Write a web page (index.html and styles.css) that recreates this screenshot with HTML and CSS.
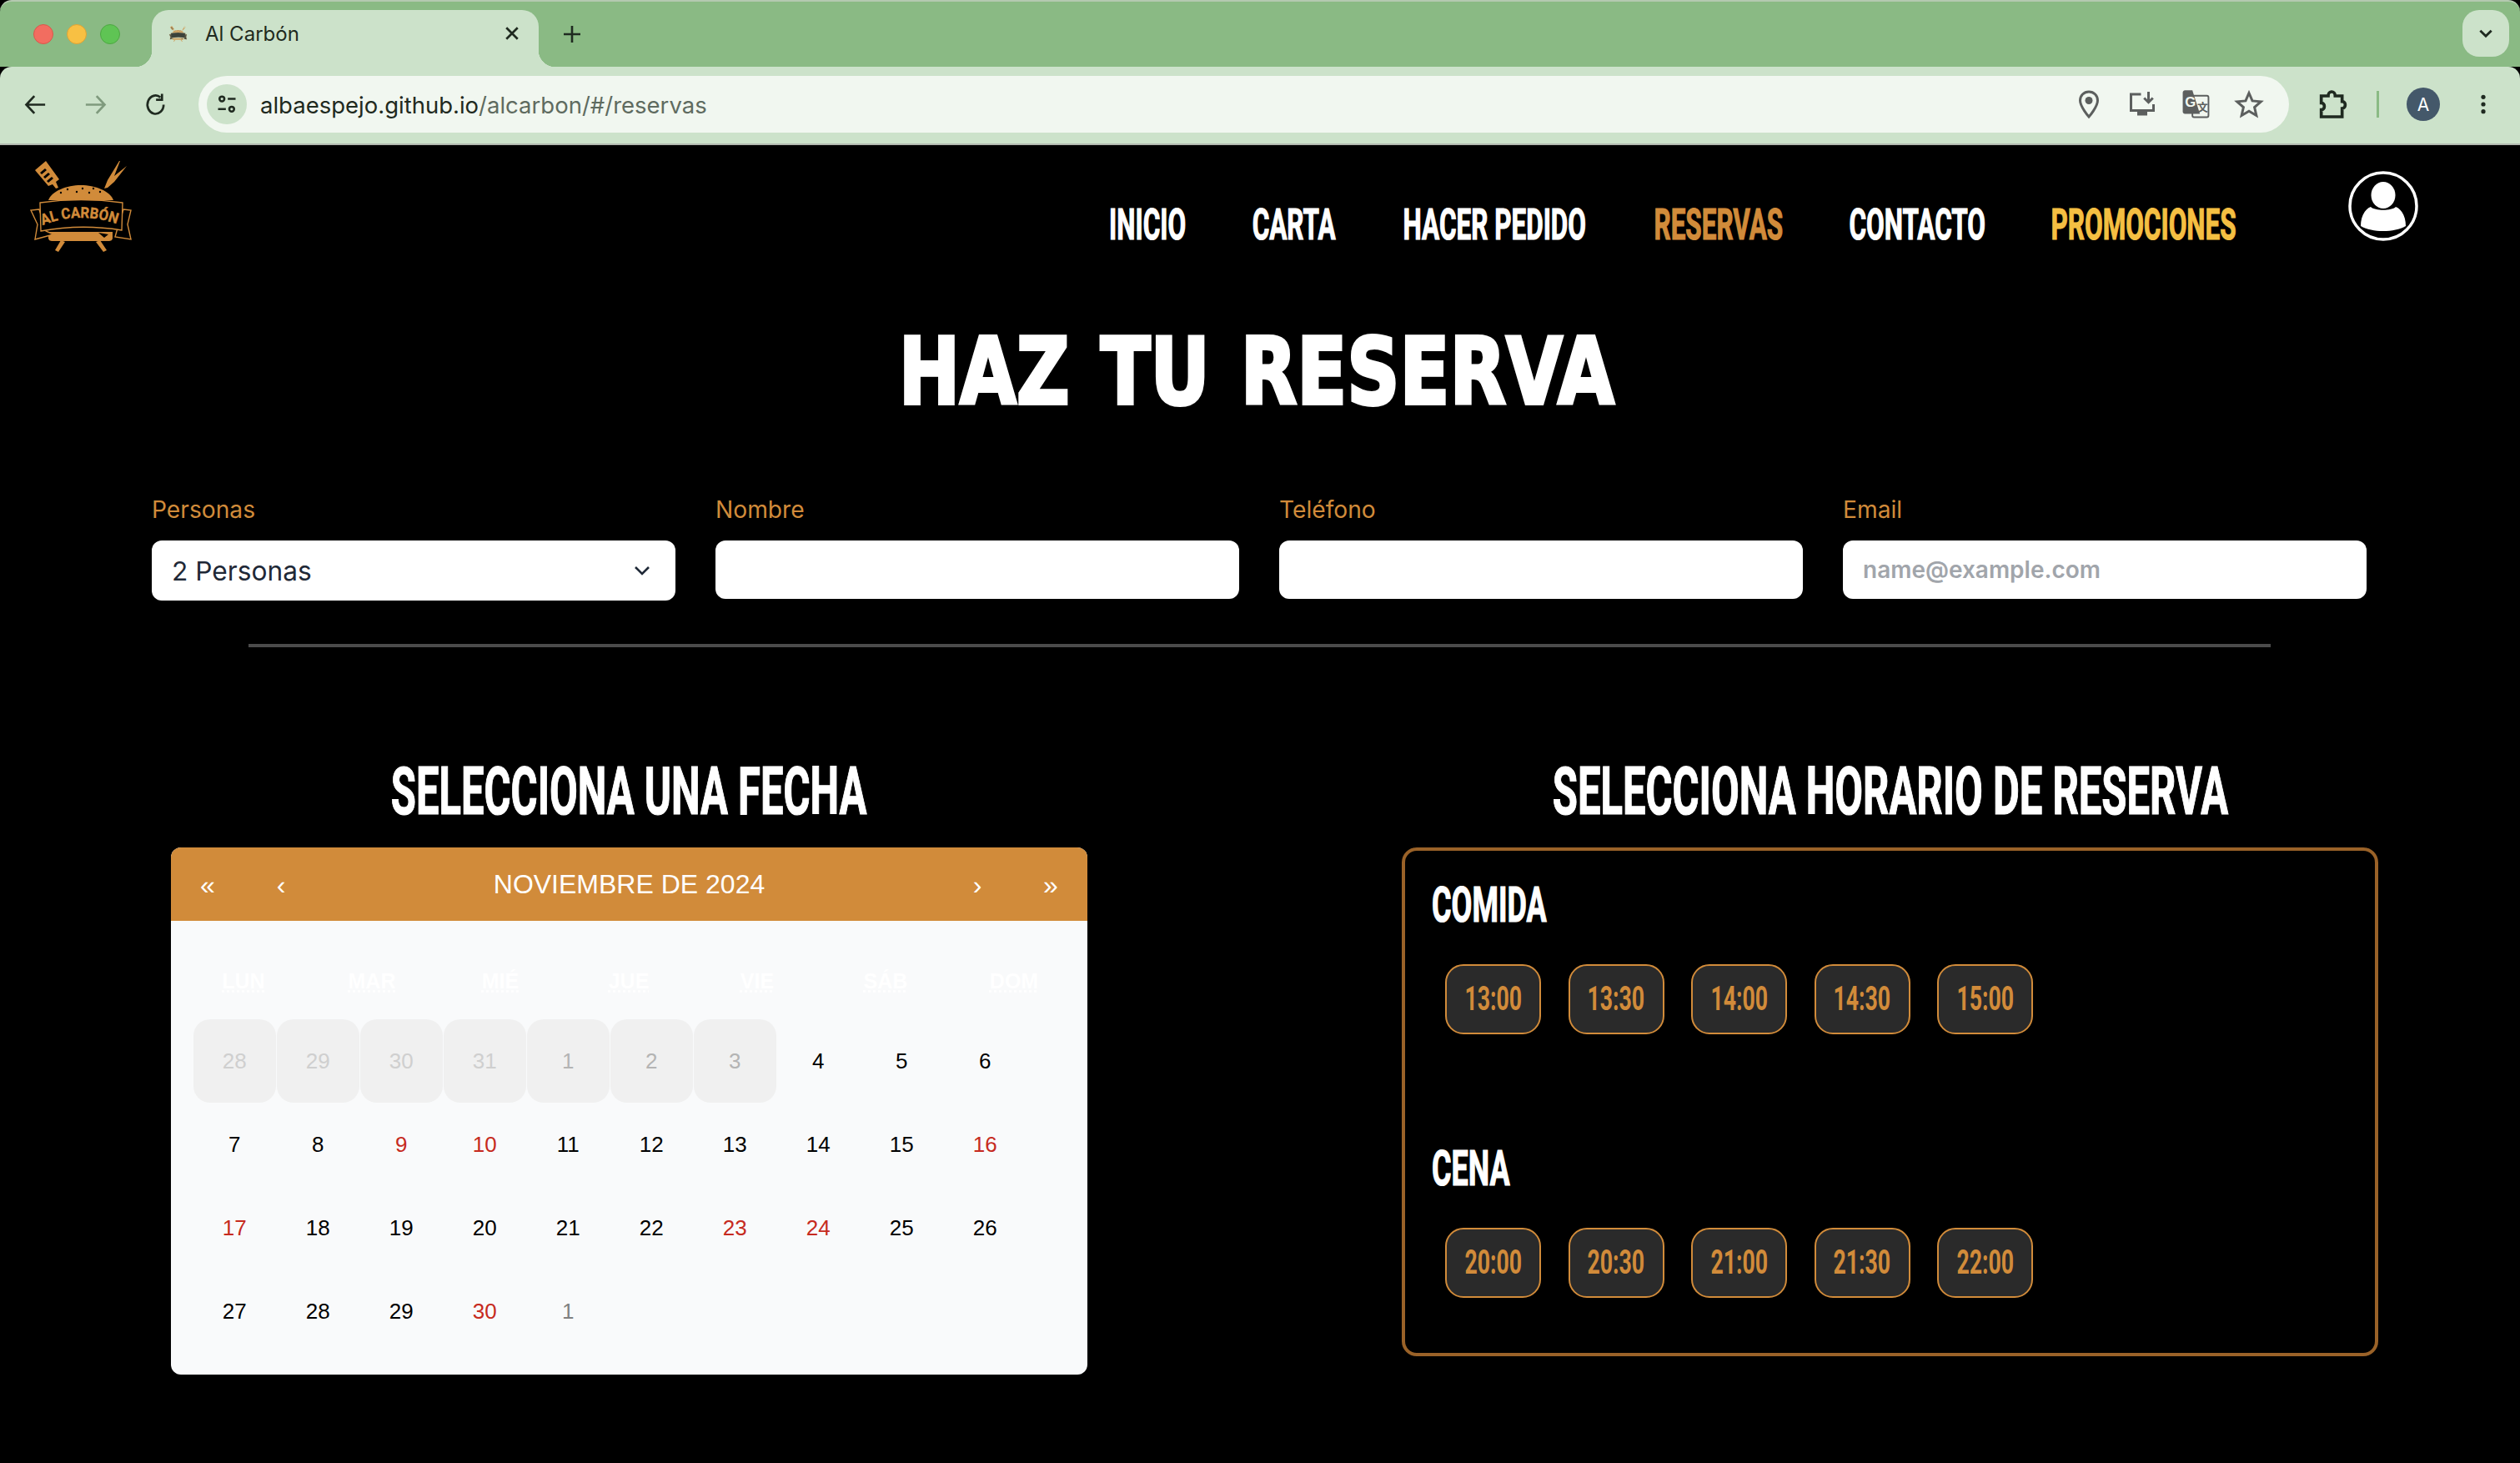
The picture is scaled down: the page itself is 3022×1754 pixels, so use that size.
FILE: index.html
```html
<!DOCTYPE html>
<html lang="es">
<head>
    <meta charset="UTF-8">
    <meta name="viewport" content="width=device-width, initial-scale=1.0">
    <title>Al Carbón</title>
    <link rel="stylesheet" href="styles.css">
</head>
<body>
    <svg class="defs" width="0" height="0" aria-hidden="true">
        <symbol id="logo-art" viewBox="0 0 160 130">
            <g fill="#d18b3a">
                <path d="M22 24 35 13 51 35 47 38 50 45 47 46 43 41 38 43z"/>
                <path d="M105 46 109 36 123 13 124 13 117 31 132 19 117 38 109 45z"/>
                <path d="M38 60C42 49 60 42 77 42S112 49 116 60z"/>
                <path d="M38 98H115V105C115 108 113 109 110 109H43C40 109 38 108 38 105z"/>
                <path d="M53 108 58 110 50 122 46 120zM95 110 100 108 108 120 104 122z"/>
            </g>
            <g fill="#000">
                <path d="M28 27 34 22 36 24 30 29zM32 32 38 27 40 29 34 34zM36 37 42 32 44 34 38 39z"/>
                <circle cx="61" cy="47" r="1.200"/><circle cx="72" cy="50" r="1.200"/><circle cx="79" cy="46" r="1.200"/><circle cx="87" cy="51" r="1.200"/><circle cx="92" cy="46" r="1.200"/><circle cx="100" cy="50" r="1.200"/><circle cx="53" cy="51" r="1.200"/>
                <path d="M98 99 110 101 105 105z"/>
            </g>
            <g fill="#000" stroke="#d18b3a" stroke-width="1.400">
                <path d="M27 71 17 72 25 89 22 107 44 101 35 97z"/>
                <path d="M128 71 137 72 133 89 137 107 118 104 120 97z"/>
                <path d="M28 63Q77 56 127 63L126 96Q77 88 29 97z"/>
            </g>
        </symbol>
    </svg>

    <div class="tabstrip">
        <div class="lights">
            <span class="light light-red"></span>
            <span class="light light-yellow"></span>
            <span class="light light-green"></span>
        </div>
        <div class="tab">
            <svg class="favicon"><use href="#logo-art"/></svg>
            <span class="tab-title">Al Carbón</span>
            <svg class="tab-close" viewBox="0 0 16 16"><path d="M2 2 14 14M14 2 2 14"/></svg>
        </div>
        <svg class="tab-new" viewBox="0 0 24 24"><path d="M12 2V22M2 12H22"/></svg>
        <div class="tab-search">
            <svg viewBox="0 0 24 24"><path d="M4 8 12 16 20 8"/></svg>
        </div>
    </div>

    <div class="toolbar">
        <button class="tool">
            <svg viewBox="0 0 24 24"><path d="M21 12H4M11 4 3.500 12 11 20"/></svg>
        </button>
        <button class="tool tool-off">
            <svg viewBox="0 0 24 24"><path d="M3 12H20M13 4 20.500 12 13 20"/></svg>
        </button>
        <button class="tool">
            <svg viewBox="0 0 24 24"><path d="M19.500 12A7.500 8.500 0 1 1 16.500 5.200M18 2V7.500H12.500"/></svg>
        </button>
        <div class="omnibox">
            <span class="site-chip">
                <svg viewBox="0 0 24 24">
                    <circle cx="7" cy="6.500" r="2.500"/><path d="M13 6.500H21M3 17H11"/><circle cx="17" cy="17" r="2.500"/>
                </svg>
            </span>
            <span class="url">albaespejo.github.io<span class="url-path">/alcarbon/#/reservas</span></span>
            <div class="omni-icons">
                <span class="omni-icon">
                    <svg viewBox="0 0 24 24"><path d="M12 2C8 2 5 5 5 9C5 14 12 22 12 22S19 14 19 9C19 5 16 2 12 2Z"/><circle class="dot" cx="12" cy="9" r="3"/></svg>
                </span>
                <span class="omni-icon">
                    <svg viewBox="0 0 24 24"><path d="M11 4H3V17H21V12M17 2V10M13.500 7 17 10.500 20.500 7"/><path class="solid" d="M8 17H16V21H8z"/></svg>
                </span>
                <span class="omni-icon">
                    <svg viewBox="0 0 28 28">
                        <rect class="thin" x="11" y="6" width="15" height="20" rx="1.500"/>
                        <path class="solid" d="M2 3C2 2 3 1 4 1H11L18 23H4C3 23 2 22 2 21z"/>
                        <text class="translate-g" x="4" y="16">G</text>
                        <text class="translate-k" x="15.500" y="20">文</text>
                    </svg>
                </span>
                <span class="omni-icon">
                    <svg viewBox="0 0 24 24"><path d="M12 3 14.700 9.300 21.500 9.900 16.400 14.400 17.900 21 12 17.500 6.100 21 7.600 14.400 2.500 9.900 9.300 9.300Z"/></svg>
                </span>
            </div>
        </div>
        <button class="tool tool-ext">
            <svg viewBox="0 0 24 24"><path d="M4 6H9C9 2 14 2 14 6H19V10C22 10 22 15 19 15V21H4V16C7 16 7 11 4 11Z"/></svg>
        </button>
        <span class="tool-sep"></span>
        <button class="tool"><span class="profile">A</span></button>
        <button class="tool">
            <svg class="kebab" viewBox="0 0 24 24"><circle cx="12" cy="4" r="2.400"/><circle cx="12" cy="12" r="2.400"/><circle cx="12" cy="20" r="2.400"/></svg>
        </button>
    </div>

    <header class="site-header">
        <svg class="logo" viewBox="0 0 160 130">
            <use href="#logo-art" width="160" height="130"/>
            <path id="logo-arc" d="M31 90Q77 72 124 90" fill="none"/>
            <text class="logo-text"><textPath href="#logo-arc" textLength="91" lengthAdjust="spacingAndGlyphs">AL CARBÓN</textPath></text>
        </svg>
        <div class="header-right">
            <nav class="nav">
                <a class="nav-link"><span class="bebas">INICIO</span></a>
                <a class="nav-link"><span class="bebas">CARTA</span></a>
                <a class="nav-link"><span class="bebas">HACER PEDIDO</span></a>
                <a class="nav-link nav-active"><span class="bebas">RESERVAS</span></a>
                <a class="nav-link"><span class="bebas">CONTACTO</span></a>
                <a class="nav-link nav-promo"><span class="bebas">PROMOCIONES</span></a>
            </nav>
            <svg class="user" viewBox="0 0 84 84">
                <circle class="user-ring" cx="42" cy="42" r="40"/>
                <ellipse cx="42" cy="29" rx="14.500" ry="16"/>
                <path d="M27 43C32 48 52 48 57 43C65 46 69 56 69 66C55 74 29 74 15 66C15 56 19 46 27 43Z"/>
            </svg>
        </div>
    </header>

    <h1 class="page-title"><span>HAZ TU RESERVA</span></h1>

    <form class="form-grid">
        <div class="field">
            <label class="field-label" for="personas">Personas</label>
            <div class="select-wrap">
                <select id="personas" class="field-select">
                    <option>2 Personas</option>
                </select>
                <svg class="select-arrow" viewBox="0 0 20 12"><path d="M2 2 10 10 18 2"/></svg>
            </div>
        </div>
        <div class="field">
            <label class="field-label" for="nombre">Nombre</label>
            <input id="nombre" class="field-input" type="text">
        </div>
        <div class="field">
            <label class="field-label" for="telefono">Teléfono</label>
            <input id="telefono" class="field-input" type="text">
        </div>
        <div class="field">
            <label class="field-label" for="email">Email</label>
            <input id="email" class="field-input" type="text" placeholder="name@example.com">
        </div>
    </form>

    <hr class="divider">

    <main class="booking">
        <section>
            <h2 class="section-title"><span class="bebas">SELECCIONA UNA FECHA</span></h2>
            <div class="calendar">
                <div class="cal-head">
                    <span class="cal-nav">«</span>
                    <span class="cal-nav">‹</span>
                    <span class="cal-month">NOVIEMBRE DE 2024</span>
                    <span class="cal-nav">›</span>
                    <span class="cal-nav">»</span>
                </div>
                <div class="cal-weekdays">
                    <abbr>LUN</abbr><abbr>MAR</abbr><abbr>MIÉ</abbr><abbr>JUE</abbr><abbr>VIE</abbr><abbr>SÁB</abbr><abbr>DOM</abbr>
                </div>
                <div class="cal-days">
                    <span class="day day-off day-faint">28</span>
                    <span class="day day-off day-faint">29</span>
                    <span class="day day-off day-faint">30</span>
                    <span class="day day-off day-faint">31</span>
                    <span class="day day-off">1</span>
                    <span class="day day-off">2</span>
                    <span class="day day-off">3</span>
                    <span class="day">4</span>
                    <span class="day">5</span>
                    <span class="day">6</span>
                    <span class="day">7</span>
                    <span class="day">8</span>
                    <span class="day day-red">9</span>
                    <span class="day day-red">10</span>
                    <span class="day">11</span>
                    <span class="day">12</span>
                    <span class="day">13</span>
                    <span class="day">14</span>
                    <span class="day">15</span>
                    <span class="day day-red">16</span>
                    <span class="day day-red">17</span>
                    <span class="day">18</span>
                    <span class="day">19</span>
                    <span class="day">20</span>
                    <span class="day">21</span>
                    <span class="day">22</span>
                    <span class="day day-red">23</span>
                    <span class="day day-red">24</span>
                    <span class="day">25</span>
                    <span class="day">26</span>
                    <span class="day">27</span>
                    <span class="day">28</span>
                    <span class="day">29</span>
                    <span class="day day-red">30</span>
                    <span class="day day-next">1</span>
                </div>
            </div>
        </section>

        <section>
            <h2 class="section-title"><span class="bebas">SELECCIONA HORARIO DE RESERVA</span></h2>
            <div class="hours">
                <h3 class="hours-title"><span class="bebas">COMIDA</span></h3>
                <div class="slots">
                    <button class="slot"><span>13:00</span></button>
                    <button class="slot"><span>13:30</span></button>
                    <button class="slot"><span>14:00</span></button>
                    <button class="slot"><span>14:30</span></button>
                    <button class="slot"><span>15:00</span></button>
                </div>
                <h3 class="hours-title hours-title-next"><span class="bebas">CENA</span></h3>
                <div class="slots">
                    <button class="slot"><span>20:00</span></button>
                    <button class="slot"><span>20:30</span></button>
                    <button class="slot"><span>21:00</span></button>
                    <button class="slot"><span>21:30</span></button>
                    <button class="slot"><span>22:00</span></button>
                </div>
            </div>
        </section>
    </main>
</body>
</html>
```

FILE: styles.css
```css
* {
    box-sizing: border-box;
}
html, body {
    margin: 0;
    height: 100%;
}
body {
    background: #000;
    font-family: Inter, "Liberation Sans", sans-serif;
    overflow: hidden;
}
.defs {
    display: block;
    height: 0;
}
button {
    border: none;
    background: none;
    padding: 0;
    font: inherit;
}

/* browser chrome */
.tabstrip {
    display: flex;
    height: 80px;
    background: #8aba84;
    border-radius: 14px 14px 0 0;
    border-top: 2px solid #b4c9b0;
}
.lights {
    display: flex;
    gap: 16px;
    margin: 27px 38px 0 40px;
}
.light {
    width: 24px;
    height: 24px;
    border-radius: 50%;
}
.light-red {
    background: #f26d60;
    border: 1px solid #d9574b;
}
.light-yellow {
    background: #f8c043;
    border: 1px solid #dca335;
}
.light-green {
    background: #5fc454;
    border: 1px solid #4da842;
}
.tab {
    position: relative;
    display: flex;
    align-items: center;
    width: 464px;
    height: 68px;
    margin-top: 10px;
    padding: 0 23px 12px 18px;
    background: #cce2ca;
    border-radius: 20px 20px 0 0;
}
.tab::before,
.tab::after {
    content: "";
    position: absolute;
    bottom: 0;
    width: 20px;
    height: 20px;
}
.tab::before {
    left: -20px;
    background: radial-gradient(circle at 0 0, #8aba84 20px, #cce2ca 20.5px);
}
.tab::after {
    right: -20px;
    background: radial-gradient(circle at 100% 0, #8aba84 20px, #cce2ca 20.5px);
}
.favicon {
    width: 28px;
    height: 24px;
    opacity: .7;
    flex: none;
}
.tab-title {
    margin-left: 18px;
    font-size: 24px;
    color: #1f2a20;
    flex: 1;
}
.tab-close {
    width: 18px;
    height: 18px;
    fill: none;
    stroke: #1f2a20;
    stroke-width: 2.400;
}
.tab-new {
    width: 24px;
    height: 24px;
    margin: 27px 0 0 28px;
    fill: none;
    stroke: #1f2a20;
    stroke-width: 2.600;
}
.tab-search {
    display: flex;
    align-items: center;
    justify-content: center;
    width: 56px;
    height: 56px;
    margin: 10px 13px 0 auto;
    background: #cce2ca;
    border-radius: 20px;
}
.tab-search svg {
    width: 20px;
    height: 20px;
    fill: none;
    stroke: #1f2a20;
    stroke-width: 3.400;
}
.toolbar {
    display: flex;
    align-items: center;
    height: 94px;
    padding: 0 8px 2px 6px;
    background: #cce2ca;
    border-bottom: 2px solid #b3b9b0;
    border-radius: 14px 14px 0 0;
    position: relative;
}
.tool {
    display: flex;
    align-items: center;
    justify-content: center;
    width: 72px;
    height: 60px;
    flex: none;
}
.tool svg {
    width: 31px;
    height: 31px;
    fill: none;
    stroke: #1f2a20;
    stroke-width: 2.100;
}
.tool-off svg {
    stroke: #7f9a7d;
}
.tool-ext svg {
    width: 40px;
    height: 40px;
    stroke-width: 2.200;
}
.tool-sep {
    width: 3px;
    height: 32px;
    margin: 0 17px 0 17px;
    background: #8aba84;
    flex: none;
}
.profile {
    display: flex;
    align-items: center;
    justify-content: center;
    width: 40px;
    height: 40px;
    border-radius: 50%;
    background: #44586a;
    color: #fff;
    font-size: 21px;
}
.tool .kebab {
    width: 26px;
    height: 26px;
    fill: #1f2a20;
    stroke: none;
}
.omnibox {
    display: flex;
    align-items: center;
    flex: 1;
    height: 68px;
    margin: 0 16px;
    padding: 0 16px 0 10px;
    background: #f1f7f0;
    border-radius: 34px;
}
.site-chip {
    display: flex;
    align-items: center;
    justify-content: center;
    width: 48px;
    height: 48px;
    background: #cce2ca;
    border-radius: 50%;
}
.site-chip svg {
    width: 28px;
    height: 28px;
    fill: none;
    stroke: #1f2a20;
    stroke-width: 2.200;
}
.url {
    margin-left: 16px;
    padding-top: 2px;
    font-size: 27.500px;
    color: #1f2a20;
}
.url-path {
    color: #5f6b60;
}
.omni-icons {
    display: flex;
    margin-left: auto;
}
.omni-icon {
    display: flex;
    align-items: center;
    justify-content: center;
    width: 64px;
    height: 48px;
}
.omni-icon svg {
    width: 36px;
    height: 36px;
    fill: none;
    stroke: #5c5f5e;
    stroke-width: 2;
}
.omni-icon .dot,
.omni-icon .solid {
    fill: #5c5f5e;
    stroke: none;
}
.omni-icon .thin {
    stroke-width: 1.500;
}
.translate-g {
    font: 700 13px "Liberation Sans", sans-serif;
    fill: #f1f7f0;
    stroke: none;
}
.translate-k {
    font: 700 10px "Noto Sans CJK SC", sans-serif;
    fill: #5c5f5e;
    stroke: none;
}

/* condensed display type, no Bebas Neue on hand */
.bebas {
    display: inline-block;
    flex: none;
    font-family: Roboto, sans-serif;
    font-weight: 700;
    white-space: nowrap;
    -webkit-text-stroke: 1.200px currentColor;
    transform: scaleX(.612);
}

/* site header */
.site-header {
    display: flex;
    justify-content: space-between;
    height: 156px;
    padding: 6px 122px 0 20px;
    color: #fff;
}
.logo {
    width: 160px;
    height: 130px;
}
.logo-text {
    font: 700 18px Roboto, sans-serif;
    fill: #d18b3a;
    stroke: #d18b3a;
    stroke-width: .4;
}
.header-right {
    display: flex;
    align-items: flex-start;
    gap: 135px;
}
.nav {
    display: grid;
    grid-template-columns: 91px 98px 220px 156px 159px 221px;
    column-gap: 81px;
    margin-top: 60px;
}
.nav-link {
    display: flex;
    justify-content: center;
    font-size: 52px;
    line-height: 60px;
}
.nav-link .bebas {
    transform: scaleX(.605);
}
.nav-active {
    color: #d18b3a;
}
.nav-promo {
    color: #f5bf42;
}
.user {
    width: 84px;
    height: 84px;
    margin-top: 25px;
    fill: #fff;
}
.user-ring {
    fill: none;
    stroke: #fff;
    stroke-width: 3.500;
}

/* title */
.page-title {
    display: flex;
    justify-content: center;
    margin: 56px 0 0 -8px;
    font: 700 110px/120px "DejaVu Sans", sans-serif;
    color: #fff;
}
.page-title span {
    flex: none;
    white-space: nowrap;
    word-spacing: 8px;
    -webkit-text-stroke: 4px #fff;
    transform: scaleX(.798);
}

/* form */
.form-grid {
    display: grid;
    grid-template-columns: repeat(4, 628px);
    column-gap: 48px;
    align-items: start;
    margin: 88px 0 0 182px;
}
.field-label {
    display: block;
    margin-bottom: 20px;
    font-size: 28.200px;
    line-height: 34px;
    color: #d18b3a;
}
.select-wrap {
    position: relative;
}
.field-select,
.field-input {
    display: block;
    width: 100%;
    border: none;
    border-radius: 12px;
    background: #fff;
    font-family: Inter, sans-serif;
    outline: none;
}
.field-select {
    height: 72px;
    padding: 0 24px;
    appearance: none;
    font-size: 31.700px;
    color: #1f2937;
}
.select-arrow {
    position: absolute;
    top: 30px;
    right: 30px;
    width: 20px;
    height: 12px;
    fill: none;
    stroke: #1f2937;
    stroke-width: 2.600;
}
.field-input {
    height: 70px;
    padding: 0 24px;
    font-size: 28px;
    font-weight: 600;
}
.field-input::placeholder {
    color: #a1a5ab;
}
.divider {
    width: 2425px;
    height: 4px;
    margin: 52px 0 0 298px;
    border: none;
    background: #4b4b4b;
}

/* columns */
.booking {
    display: grid;
    grid-template-columns: 1099px 1171px;
    column-gap: 377px;
    margin: 122px 0 0 205px;
}
.section-title {
    display: flex;
    justify-content: center;
    height: 100px;
    margin: 0 0 18px;
    padding-top: 1px;
    font-size: 80px;
    line-height: 100px;
    color: #fff;
}

/* calendar */
.calendar {
    height: 632px;
    background: #f9fafb;
    border-radius: 12px;
    overflow: hidden;
    font-family: "Liberation Sans", sans-serif;
}
.cal-head {
    display: grid;
    grid-template-columns: 88px 88px 1fr 88px 88px;
    height: 88px;
    background: #d18b3a;
    color: #fff;
    align-items: center;
    text-align: center;
}
.cal-nav {
    font-size: 32px;
    padding-top: 2px;
}
.cal-month {
    font-size: 32px;
}
.cal-weekdays {
    display: grid;
    grid-template-columns: repeat(7, 154px);
    padding: 57px 0 31px 10px;
    text-align: center;
    font-size: 25px;
    font-weight: 700;
    line-height: 30px;
    color: #fff;
}
.cal-weekdays abbr {
    text-decoration: underline dotted;
}
.cal-days {
    display: grid;
    grid-template-columns: repeat(10, 98.500px);
    grid-auto-rows: 100px;
    column-gap: 1.500px;
    padding-left: 27px;
}
.day {
    display: flex;
    align-items: center;
    justify-content: center;
    border-radius: 20px;
    font-size: 26px;
    color: #000;
}
.day-off {
    background: #f0f0f0;
    color: #b4b4b4;
}
.day-faint {
    color: #cfcfcf;
}
.day-red {
    color: #c62a20;
}
.day-next {
    color: #808080;
}

/* hours */
.hours {
    height: 610px;
    padding: 30px 32px 0;
    border: 4px solid #9a6228;
    border-radius: 18px;
}
.hours-title {
    display: flex;
    justify-content: flex-start;
    margin: 0;
    font-size: 60px;
    line-height: 70px;
    color: #fff;
}
.hours-title .bebas {
    transform: scaleX(.6);
    transform-origin: 0 50%;
}
.hours-title-next {
    margin-top: 126px;
}
.slots {
    display: flex;
    gap: 32.500px;
    margin: 36px 0 0 16px;
}
.slot {
    display: flex;
    align-items: center;
    justify-content: center;
    width: 115px;
    height: 84px;
    padding-bottom: 2px;
    background: #2a2a2a;
    border: 2px solid #d18b3a;
    border-radius: 22px;
    color: #d18b3a;
    font: 700 41px Roboto, sans-serif;
}
.slot span {
    flex: none;
    transform: scaleX(.65);
}
```
